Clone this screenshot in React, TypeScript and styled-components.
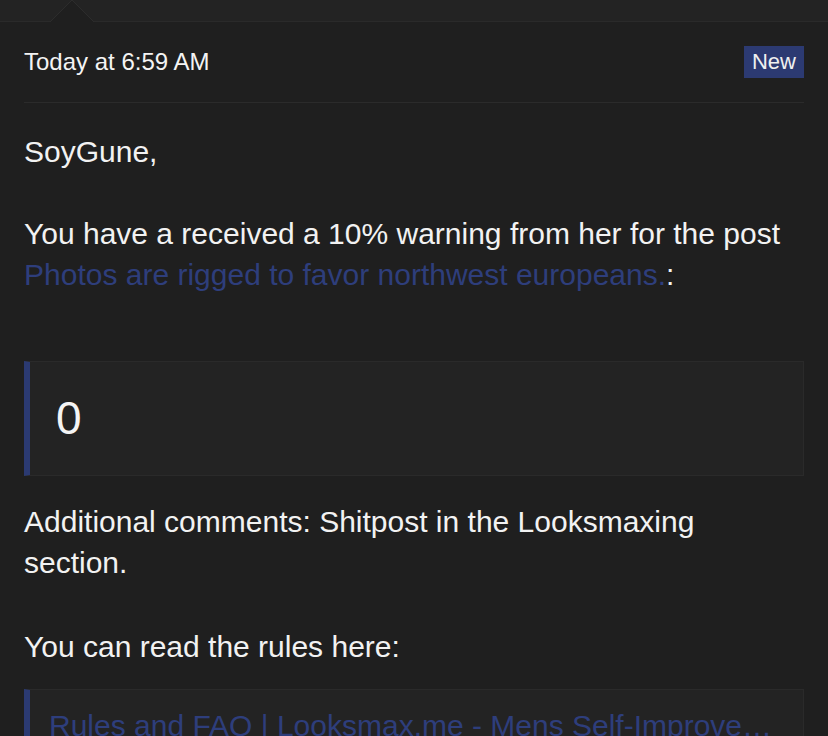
import styled, { createGlobalStyle } from "styled-components"

const GlobalStyle = createGlobalStyle`
  html, body {
    margin: 0;
    padding: 0;
    background: #1f1f1f;
  }
  body {
    font-family: "Liberation Sans", Arial, sans-serif;
    color: #f2f2f2;
  }
`

const Page = styled.div`
  width: 828px;
  height: 736px;
  overflow: hidden;
  background: #1f1f1f;
`

const TopBar = styled.div`
  position: relative;
  height: 21px;
  background: #232323;
  border-bottom: 1px solid #2a2a2a;
`

const Pointer = styled.svg`
  position: absolute;
  left: 50px;
  top: 0;
`

const Content = styled.div`
  padding: 0 24px;
`

const Header = styled.div`
  display: flex;
  align-items: center;
  justify-content: space-between;
  padding: 24px 0;
  border-bottom: 1px solid #2b2b2b;
`

const Time = styled.div`
  font-size: 24px;
  line-height: 32px;
  color: #f4f4f4;
`

const Badge = styled.span`
  display: inline-flex;
  align-items: center;
  height: 32px;
  padding: 0 8px;
  background: #2c3a72;
  color: #f0f0f0;
  font-size: 22px;
`

const Body = styled.div`
  padding-top: 28px;
  font-size: 30px;
  line-height: 41px;
`

const Para = styled.p<{ $gap?: number }>`
  margin: 0 0 ${(p) => p.$gap ?? 41}px;
`

const Link = styled.a`
  color: #2e3e7c;
  text-decoration: none;
`

const Quote = styled.div<{ $tight?: boolean }>`
  background: #232323;
  border: 1px solid #2a2a2a;
  border-left: 6px solid #2b3a72;
  padding: ${(p) => (p.$tight ? "15px 28px 20px 19px" : "24px 26px")};
  margin-bottom: ${(p) => (p.$tight ? 0 : 25)}px;
`

const Big = styled.div`
  font-size: 46px;
  line-height: 65px;
  color: #f4f4f4;
`

const QuoteLink = styled(Link)`
  display: block;
  white-space: nowrap;
  overflow: hidden;
  text-overflow: ellipsis;
`

export default function App() {
  return (
    <Page>
      <GlobalStyle />
      <TopBar>
        <Pointer width="44" height="22" viewBox="0 0 44 22">
          <path d="M0 22 L22 0 L44 22 Z" fill="#1f1f1f" />
          <path d="M0 22 L22 0 L44 22" fill="none" stroke="#2c2c2c" strokeWidth="1" />
        </Pointer>
      </TopBar>
      <Content>
        <Header>
          <Time>Today at 6:59 AM</Time>
          <Badge>New</Badge>
        </Header>
        <Body>
          <Para>SoyGune,</Para>
          <Para $gap={66}>
            You have a received a 10% warning from her for the post{" "}
            <Link href="#">Photos are rigged to favor northwest europeans.</Link>:
          </Para>
          <Quote>
            <Big>0</Big>
          </Quote>
          <Para $gap={43}>Additional comments: Shitpost in the Looksmaxing section.</Para>
          <Para $gap={22}>You can read the rules here:</Para>
          <Quote $tight>
            <QuoteLink href="#">Rules and FAQ | Looksmax.me - Mens Self-Improvement Forum</QuoteLink>
          </Quote>
        </Body>
      </Content>
    </Page>
  )
}
